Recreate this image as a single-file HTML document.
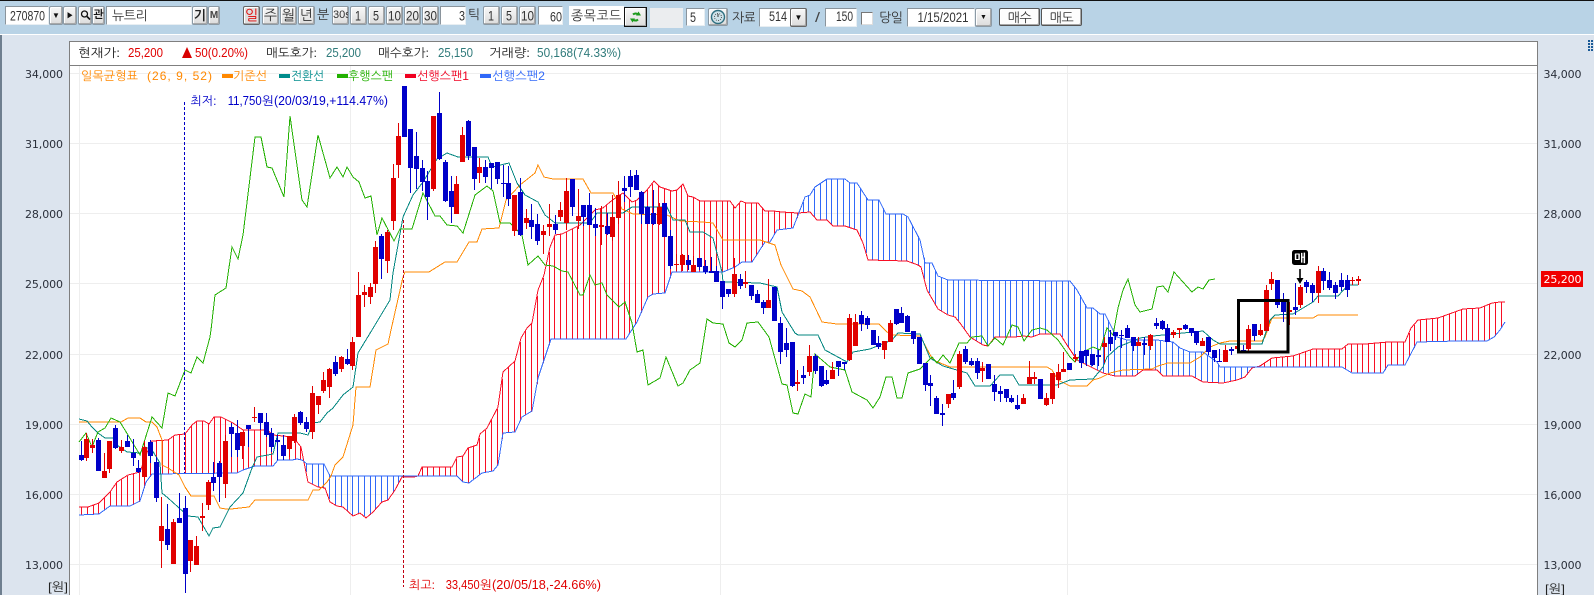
<!DOCTYPE html>
<html lang="ko"><head><meta charset="utf-8"><title>뉴트리</title>
<style>
html,body{margin:0;padding:0;background:#dce4ee}
#p{position:relative;width:1594px;height:595px;overflow:hidden;font-family:"Liberation Sans","NanumGothic","Noto Sans CJK KR",sans-serif;background:#dce4ee}
#t{position:absolute;left:0;top:0;width:1594px;height:34px;background:#b9d3e6;border-top:1px solid #111;box-sizing:border-box}
#w{position:absolute;left:0;top:34px;width:1594px;height:1px;background:#fff}
#e{position:absolute;left:0;top:35px;width:2px;height:560px;background:#6f7f8f}
.b,.i,.l{position:absolute;box-sizing:border-box;top:6px;height:19px;line-height:17px;text-align:center;font-size:13px;color:#333;white-space:nowrap;overflow:hidden}
.b{border:1px solid #8c9aa5;border-radius:2px;background:linear-gradient(#f8f8f8,#dcdcdc);box-shadow:inset -1px -1px 0 #a8a8a8,inset 1px 1px 0 #fff}
.i{background:#fff;border:1px solid;border-color:#8a949c #e8eef2 #e8eef2 #8a949c;text-align:right;padding-right:2px}
.l{background:none;border:0}
.s{top:8px}
svg{position:absolute;left:0;top:0}
.k{font-family:"Liberation Sans","NanumGothic","Noto Sans CJK KR",sans-serif;font-size:12px}
.m{font-family:"Liberation Sans",sans-serif;font-size:13px}
.t{font-family:"Liberation Sans",sans-serif;font-size:14px}
.a{font-family:"DejaVu Sans",sans-serif;font-size:11px;fill:#2a2f3a}
.n{fill:none;stroke-width:1;shape-rendering:crispEdges}
</style></head><body><div id="p">
<div id="t"></div><div id="w"></div><div id="e"></div>

<div class="i" style="left:5px;width:44px"></div>
<div class="b" style="left:49px;width:14px;font-size:8px;color:#111">▼</div>
<div class="b" style="left:63px;width:14px;font-size:8px;color:#111">▶</div>
<div class="b" style="left:78px;width:14px"><svg width="12" height="17"><circle cx="5.5" cy="7" r="3" fill="none" stroke="#111" stroke-width="1.3"/><path d="M8 9.5L11 12.5" stroke="#111" stroke-width="1.6"/></svg></div>
<div class="b" style="left:92px;width:13px;font-weight:bold;color:#111;font-size:11px">관</div>
<div class="i" style="left:106px;width:86px;text-align:left;padding-left:5px;letter-spacing:-.5px">뉴트리</div>
<div class="b" style="left:192px;width:16px;font-weight:bold;color:#222">기</div>
<div class="b" style="left:208px;width:12px;font-weight:bold;font-size:10px;color:#444">M</div>
<div class="b" style="left:243px;width:17px;color:#e00000;background:#dedede;border-color:#666;font-size:14px">일</div>
<div class="b" style="left:262px;width:17px;font-size:14px">주</div>
<div class="b" style="left:280px;width:17px;font-size:14px">월</div>
<div class="b" style="left:298px;width:17px;font-size:14px">년</div>
<div class="l" style="left:317px;width:12px">분</div>
<div class="b" style="left:332px;width:17px;font-size:11px">30s</div>
<div class="b" style="left:350px;width:17px"></div>
<div class="b" style="left:368px;width:17px"></div>
<div class="b" style="left:386px;width:17px"></div>
<div class="b" style="left:404px;width:17px"></div>
<div class="b" style="left:422px;width:17px"></div>
<div class="i" style="left:440px;width:26px"></div>
<div class="l" style="left:467px;width:14px">틱</div>
<div class="b" style="left:483px;width:17px"></div>
<div class="b" style="left:501px;width:17px"></div>
<div class="b" style="left:519px;width:17px"></div>
<div class="i" style="left:538px;width:25px"></div>
<div class="i" style="left:569px;width:55px;text-align:left;padding-left:1px;border-color:#fff;letter-spacing:.5px">종목코드입</div>
<div class="b" style="left:624px;width:23px;top:7px;height:20px;border-color:#111;border-radius:0"><svg width="21" height="18"><path d="M13.5 7A3.6 3.6 0 0 0 8 6.5" fill="none" stroke="#1c9a1c" stroke-width="2"/><path d="M11 7.5L16 7.5L13.5 3.5Z" fill="#1c9a1c"/><path d="M7.5 11A3.6 3.6 0 0 0 13 11.5" fill="none" stroke="#1c9a1c" stroke-width="2"/><path d="M5 10.5L10 10.5L7.5 14.5Z" fill="#1c9a1c"/></svg></div>
<div class="l s" style="left:650px;width:33px;height:20px;background:#ebedef"></div>
<div class="i s" style="left:686px;width:19px;height:18px"></div>
<div class="b s" style="left:708px;width:20px;height:18px"><svg width="18" height="16"><circle cx="9" cy="8" r="6.5" fill="#cfe3ea" stroke="#2f6f80" stroke-width="1.4"/><circle cx="9" cy="8" r="3.5" fill="none" stroke="#555" stroke-width="1" stroke-dasharray="1 1.2"/><path d="M9 5V8" stroke="#333"/></svg></div>
<div class="l s" style="left:732px;width:23px;top:9px;height:18px;line-height:18px;letter-spacing:-.5px">자료</div>
<div class="i s" style="left:759px;width:32px;height:19px"></div>
<div class="b s" style="left:790px;width:17px;height:19px;font-size:8px;color:#111;border-color:#666">▼</div>
<div class="i s" style="left:825px;width:32px;height:19px"></div>
<div class="l s" style="left:861px;width:12px;height:13px;top:12px;background:#fff;border:1px solid;border-color:#777 #ddd #ddd #777"></div>
<div class="l s" style="left:879px;width:23px;top:9px;height:18px;line-height:18px;letter-spacing:-.5px">당일</div>
<div class="i s" style="left:907px;width:68px;height:19px"></div>
<div class="b s" style="left:975px;width:17px;height:19px;font-size:7px;color:#111">▼</div>
<div class="b s" style="left:999px;width:41px;height:18px;border-color:#555;background:#fdfdfd;letter-spacing:-.5px">매수</div>
<div class="b s" style="left:1041px;width:41px;height:18px;border-color:#555;background:#fdfdfd;letter-spacing:-.5px">매도</div>

<svg width="1594" height="595" viewBox="0 0 1594 595" xmlns="http://www.w3.org/2000/svg" id="c">
<g class="t" fill="#333">
<text x="10" y="20.5" textLength="35" lengthAdjust="spacingAndGlyphs">270870</text>
<text x="355" y="20.5" textLength="6" lengthAdjust="spacingAndGlyphs">1</text>
<text x="373" y="20.5" textLength="6" lengthAdjust="spacingAndGlyphs">5</text>
<text x="388" y="20.5" textLength="13" lengthAdjust="spacingAndGlyphs">10</text>
<text x="406" y="20.5" textLength="13" lengthAdjust="spacingAndGlyphs">20</text>
<text x="424" y="20.5" textLength="13" lengthAdjust="spacingAndGlyphs">30</text>
<text x="459" y="20.5" textLength="6" lengthAdjust="spacingAndGlyphs">3</text>
<text x="488" y="20.5" textLength="6" lengthAdjust="spacingAndGlyphs">1</text>
<text x="506" y="20.5" textLength="6" lengthAdjust="spacingAndGlyphs">5</text>
<text x="521" y="20.5" textLength="13" lengthAdjust="spacingAndGlyphs">10</text>
<text x="550" y="21.5" textLength="12" lengthAdjust="spacingAndGlyphs">60</text>
<text x="690" y="22" textLength="6" lengthAdjust="spacingAndGlyphs">5</text>
<text x="769" y="21" textLength="18" lengthAdjust="spacingAndGlyphs">514</text>
<text x="815" y="22" textLength="5" lengthAdjust="spacingAndGlyphs" font-weight="normal" fill="#444">/</text>
<text x="836" y="21" textLength="17" lengthAdjust="spacingAndGlyphs">150</text>
<text x="917.5" y="22" textLength="51" lengthAdjust="spacingAndGlyphs">1/15/2021</text>
</g>
<rect x="69.5" y="41.5" width="1468" height="560" fill="#fff" stroke="#7f7f7f"/>
<path d="M69 65.5H1537" stroke="#7f7f7f" class="n"/>
<path class="n" stroke="#eeeeee" d="M70 73.5H1537M70 143.5H1537M70 213.5H1537M70 283.5H1537M70 354.5H1537M70 424.5H1537M70 494.5H1537M70 564.5H1537M79.5 66V595M350.5 66V595M720.5 66V595M1067.5 66V595"/>

<g id="hatch"></g>

<polyline id="lr" class="n" stroke="#f80e24" points="79,507 88,507 99,503 110,492 117,482 128,475 140,472 146,455 152,441 168,440 175,435 185,434 192,425 197,421 204,421 209,424 214,417 221,417 227,420 233,423 243,430 267,430 273,435 293,437 301,447 303,457 308,482 318,487 325,488 330,502 337,506 343,507 353,516 360,513 366,518 373,512 382,502 388,500 395,490 402,477 414,477 418,476 422,467 452,467 457,457 463,456 468,448 477,445 480,434 487,428 498,407 503,372 515,361 521,338 527,328 532,323 538,290 544,275 550,247 555,235 562,234 580,225 595,210 603,208 610,202 618,196 623,193 632,202 637,200 647,190 654,181 660,187 672,191 677,190 683,184 688,196 693,197 700,201 730,201 735,208 741,201 746,203 758,203 765,211 773,211 782,212 798,213 810,212 817,220 827,220 833,226 845,226 857,230 863,243 868,260 907,261 918,265 921,267 927,290 938,309 948,315 955,317 960,323 970,337 983,345 988,346 995,337 1015,337 1023,336 1032,337 1040,334 1060,334 1067,345 1077,360 1087,365 1103,373 1115,376 1135,376 1143,370 1157,370 1163,376 1192,376 1203,382 1223,383 1237,380 1245,377 1252,368 1260,366 1272,358 1293,356 1313,349 1342,349 1348,344 1365,344 1388,342 1405,342 1411,328 1418,320 1438,318 1463,309 1480,308 1492,303 1500,302 1505,302"/>
<polyline id="lb" class="n" stroke="#3068f8" points="79,515 99,514 110,506 130,506 140,501 146,482 152,474 237,473 243,470 255,466 273,466 278,460 292,460 297,459 302,460 307,464 324,464 330,476 457,476 463,482 469,483 482,473 493,471 498,465 503,433 515,432 522,417 532,411 538,378 545,357 551,339 626,339 633,328 637,322 648,297 653,294 665,293 672,272 723,272 735,267 742,262 752,262 765,242 770,242 777,230 793,228 805,197 810,195 815,187 827,179 845,179 850,183 857,183 868,200 879,200 886,214 903,214 908,217 920,240 925,263 932,263 938,276 948,280 1070,281 1077,290 1087,308 1093,308 1100,314 1105,314 1113,330 1117,337 1127,340 1157,340 1173,342 1180,348 1190,352 1203,352 1210,357 1217,362 1220,367 1342,367 1352,373 1383,373 1388,365 1405,365 1417,342 1458,341 1487,341 1494,337 1500,330 1505,322"/>
<polyline class="n" stroke="#ff8800" points="79,422 121,422 128,418 140,418 146,422 152,422 157,427 162,440 162,465 168,468 179,475 185,487 191,496 214,496 220,508 226,509 231,509 249,507 255,500 308,500 313,490 319,490 327,482 331,476 335,465 343,457 353,425 356,387 370,387 376,350 388,344 391,330 403,277 405,272 429,272 445,262 457,262 469,242 477,242 482,229 499,228 506,200 520,185 535,173 538,165 544,177 553,179 583,179 591,193 613,193 622,209 633,214 667,215 680,221 703,222 713,223 723,240 760,240 775,245 781,265 793,289 802,291 810,297 822,322 837,324 879,324 887,332 893,335 920,336 933,360 950,367 1047,367 1052,370 1058,380 1070,386 1087,386 1093,380 1100,378 1110,373 1123,370 1152,369 1158,366 1168,363 1190,363 1200,357 1210,347 1220,343 1230,341 1262,341 1265,337 1272,318 1313,318 1318,315 1358,315"/>
<polyline class="n" stroke="#00857f" points="79,419 87,421 92,427 98,433 105,438 113,438 117,445 127,452 140,453 145,447 152,450 160,463 162,493 168,498 178,507 188,516 198,517 209,536 213,528 220,527 230,507 243,493 252,468 257,457 273,454 278,433 300,433 308,435 313,423 320,422 327,413 333,408 343,395 353,387 358,353 372,330 390,300 393,273 403,217 413,195 423,182 437,159 447,153 458,157 488,157 492,167 509,163 517,183 525,195 538,202 545,215 555,223 590,223 597,213 623,213 632,207 667,207 673,220 685,220 690,232 703,232 713,238 722,272 723,282 760,283 777,287 782,312 795,333 798,335 818,335 825,350 847,362 853,352 870,349 892,340 898,333 920,334 930,358 943,366 967,373 975,386 990,386 1000,375 1013,375 1019,385 1057,385 1070,380 1093,379 1103,367 1107,357 1118,347 1140,338 1153,336 1203,331 1213,340 1220,344 1262,344 1270,320 1275,315 1293,314 1313,302 1318,296 1338,296 1348,285 1358,285"/>
<polyline class="n" stroke="#22b000" points="79,442 86,433 92,447 98,432 105,428 111,418 120,422 128,435 140,455 152,417 162,428 168,393 175,396 185,370 191,373 197,357 203,363 210,337 211,330 215,295 226,288 232,247 238,259 243,235 255,137 261,137 267,167 272,168 284,197 290,116 302,200 307,207 318,135 330,178 337,167 343,177 347,167 353,177 359,182 365,198 371,196 377,235 382,218 394,241 400,229 412,229 423,193 435,216 440,216 447,225 457,226 463,233 475,195 487,186 493,191 500,223 510,223 522,235 528,265 538,256 545,265 553,266 562,271 568,272 580,295 583,295 590,275 595,285 602,283 607,295 619,307 625,302 632,323 637,352 643,350 648,385 660,378 666,357 678,386 683,383 690,370 700,363 707,319 713,323 723,324 729,343 735,347 742,340 747,323 758,322 769,337 782,384 787,385 793,413 798,414 805,394 811,397 815,354 830,367 845,370 852,392 867,400 873,408 880,397 886,377 892,377 897,398 902,398 908,373 920,369 932,357 937,363 943,355 950,363 959,343 967,343 972,337 982,336 988,346 995,338 1003,345 1012,325 1018,327 1024,341 1032,330 1040,328 1047,330 1058,340 1070,357 1075,362 1083,352 1093,347 1100,350 1107,328 1113,335 1118,308 1123,290 1128,279 1135,305 1140,312 1152,309 1157,287 1163,286 1168,292 1174,272 1192,292 1198,287 1203,289 1209,280 1215,279"/>

<path d="M184.5 102V473" stroke="#0000c8" stroke-dasharray="3 2" class="n"/>
<path d="M403.5 220V587" stroke="#c00010" stroke-dasharray="3 2" class="n"/>

<g id="cand" shape-rendering="crispEdges"></g>

<rect x="1238.5" y="300.5" width="49.5" height="51.5" fill="none" stroke="#000" stroke-width="3" shape-rendering="crispEdges"/>
<rect x="1292" y="250" width="16" height="15" rx="2.5" fill="#000"/>
<text x="1294" y="262" class="k" fill="#fff" textLength="12" lengthAdjust="spacingAndGlyphs" style="font-size:11px;font-weight:bold">매</text>
<path d="M1300 269V279" stroke="#000" stroke-width="1.6"/><path d="M1296.5 278H1303.5L1300 284Z" fill="#000"/>

<g class="k">
<text x="78" y="57" fill="#222" textLength="42" lengthAdjust="spacingAndGlyphs">현재가:</text>
<polygon points="182,58 192,58 187,47" fill="#d80000"/>
<text x="266" y="57" fill="#222" textLength="51" lengthAdjust="spacingAndGlyphs">매도호가:</text>
<text x="378" y="57" fill="#222" textLength="51" lengthAdjust="spacingAndGlyphs">매수호가:</text>
<text x="489" y="57" fill="#222" textLength="41" lengthAdjust="spacingAndGlyphs">거래량:</text>

<text x="81" y="80" fill="#ff8800" textLength="57" lengthAdjust="spacingAndGlyphs">일목균형표</text>
<text x="147" y="80" fill="#ff8800" textLength="65" lengthAdjust="spacing">(26, 9, 52)</text>
<rect x="222" y="74" width="11" height="4" fill="#ff8800"/><text x="233" y="80" fill="#ff8800" textLength="34" lengthAdjust="spacingAndGlyphs">기준선</text>
<rect x="279" y="74" width="11" height="4" fill="#008c8c"/><text x="291" y="80" fill="#008c8c" textLength="33" lengthAdjust="spacingAndGlyphs">전환선</text>
<rect x="337" y="74" width="11" height="4" fill="#22b000"/><text x="348" y="80" fill="#22b000" textLength="45" lengthAdjust="spacingAndGlyphs">후행스팬</text>
<rect x="405" y="74" width="11" height="4" fill="#f00020"/><text x="417" y="80" fill="#f00020" textLength="52" lengthAdjust="spacingAndGlyphs">선행스팬1</text>
<rect x="480" y="74" width="11" height="4" fill="#3068f8"/><text x="492" y="80" fill="#3068f8" textLength="53" lengthAdjust="spacingAndGlyphs">선행스팬2</text>

<text x="190.5" y="105" fill="#0000c8" textLength="26" lengthAdjust="spacingAndGlyphs">최저:</text>
<text x="262" y="105" fill="#0000c8" textLength="12" lengthAdjust="spacingAndGlyphs">원</text>
<text x="409" y="589" fill="#e00000" textLength="26" lengthAdjust="spacingAndGlyphs">최고:</text>
<text x="480" y="589" fill="#e00000" textLength="12" lengthAdjust="spacingAndGlyphs">원</text>
<text x="48" y="591" fill="#222" textLength="20" lengthAdjust="spacingAndGlyphs">[원]</text>
<text x="1545" y="593" fill="#222" textLength="20" lengthAdjust="spacingAndGlyphs">[원]</text>
</g>
<g class="m">
<text x="128" y="57" fill="#e00000" textLength="35" lengthAdjust="spacingAndGlyphs">25,200</text>
<text x="195" y="57" fill="#e00000" textLength="53" lengthAdjust="spacingAndGlyphs">50(0.20%)</text>
<text x="326" y="57" fill="#2f7a7a" textLength="35" lengthAdjust="spacingAndGlyphs">25,200</text>
<text x="438" y="57" fill="#2f7a7a" textLength="35" lengthAdjust="spacingAndGlyphs">25,150</text>
<text x="537" y="57" fill="#2f7a7a" textLength="84" lengthAdjust="spacingAndGlyphs">50,168(74.33%)</text>
<text x="227.7" y="105" fill="#0000c8" textLength="34" lengthAdjust="spacingAndGlyphs">11,750</text>
<text x="274" y="105" fill="#0000c8" textLength="114" lengthAdjust="spacingAndGlyphs">(20/03/19,+114.47%)</text>
<text x="445.7" y="589" fill="#e00000" textLength="34" lengthAdjust="spacingAndGlyphs">33,450</text>
<text x="492" y="589" fill="#e00000" textLength="109" lengthAdjust="spacingAndGlyphs">(20/05/18,-24.66%)</text>
</g>
<g class="a">
<text x="25" y="78" textLength="38">34,000</text><text x="25" y="148" textLength="38">31,000</text><text x="25" y="218" textLength="38">28,000</text><text x="25" y="288" textLength="38">25,000</text><text x="25" y="359" textLength="38">22,000</text><text x="25" y="429" textLength="38">19,000</text><text x="25" y="499" textLength="38">16,000</text><text x="25" y="569" textLength="38">13,000</text>
<text x="1543.5" y="78" textLength="38">34,000</text><text x="1543.5" y="148" textLength="38">31,000</text><text x="1543.5" y="218" textLength="38">28,000</text><text x="1543.5" y="359" textLength="38">22,000</text><text x="1543.5" y="429" textLength="38">19,000</text><text x="1543.5" y="499" textLength="38">16,000</text><text x="1543.5" y="569" textLength="38">13,000</text>
</g>
<rect x="1541" y="271" width="42" height="16" fill="#f00000"/>
<text x="1543.5" y="283" class="a" style="fill:#fff" textLength="38">25,200</text>
<path d="M1588 40h2v2h-2zM1591 40h2v2h-2zM1588 43h2v2h-2zM1591 43h2v2h-2zM1588 46h2v2h-2zM1591 46h2v2h-2zM1588 49h2v2h-2zM1591 49h2v2h-2z" fill="#1a5a96"/>
</svg>
</div>
<script>
(function(){
var G=[
[60,330,[[64,0,333,375,390,392],[79,1,310,327,383,392],[97,1,327,345,354,368],[115,0,325,330,423,423],[133,1,368,423,443,443],[148,1,333,333,417,428],[166,0,285,293,353,357],[184,1,330,351,362,368],[202,0,315,333,351,351],[220,0,327,369,384,408],[235,0,390,414,426,428],[253,1,333,351,441,450],[271,0,330,336,378,398],[289,0,380,396,503,515],[304,1,500,588,633,714],[322,0,522,597,644,660],[340,1,567,576,702,702],[358,0,490,564,578,578],[376,0,498,534,731,789],[391,1,630,630,693,725],[409,1,618,648,705,705],[427,1,519,558,563,603],[445,1,450,456,525,540],[460,0,396,441,459,482],[478,0,393,399,441,515],[496,1,315,333,462,504],[514,0,280,291,312,381],[532,0,270,309,360,380],[547,1,305,306,348,388],[565,0,285,285,297,351],[583,1,231,260,263,276],[601,0,249,249,279,300],[619,0,250,276,315,320],[634,0,295,309,351,365],[652,0,315,330,336,390],[670,0,315,345,378,390],[688,1,318,318,357,380],[703,1,252,261,333,340],[721,0,243,246,279,285],[739,0,262,276,297,305],[757,1,168,189,305,327],[775,1,198,198,225,252],[790,1,126,150,183,190],[808,1,114,117,171,204],[826,0,78,96,132,138],[844,1,78,81,117,125],[862,0,57,87,102,105],[877,1,22,36,108,120]]],
[60,60,[[895,1,636,705,831,831],[913,1,675,696,705,740],[931,1,670,681,711,732],[946,1,543,561,672,700],[964,0,522,528,597,657],[982,1,510,516,603,638],[1000,1,312,354,483,510],[1015,1,189,228,315,354],[1033,0,78,78,231,231],[1051,0,207,207,324,399],[1069,0,216,288,327,387],[1087,0,300,324,366,393],[1102,0,333,363,411,480],[1120,1,168,168,387,393],[1138,0,96,159,297,300],[1156,0,300,306,423,426],[1174,0,348,393,441,489],[1189,1,348,372,462,462],[1207,1,201,225,306,306],[1225,0,180,183,288,300],[1243,0,261,261,357,390],[1258,1,293,321,339,370],[1276,0,300,321,351,369],[1294,0,309,309,324,386],[1312,0,306,306,357,372]]],
[500,140,[[10,0,75,128,131,170],[25,0,78,129,177,198],[43,1,165,165,273,288],[61,0,114,156,285,288],[79,1,207,234,249,267],[94,0,192,240,261,297],[112,0,222,252,303,315],[130,1,255,273,285,342],[148,1,192,252,261,288],[166,0,225,252,270,282],[181,1,186,210,231,243],[199,1,114,153,249,270],[217,0,117,117,201,228],[235,1,147,228,243,267],[250,0,195,195,231,258],[268,0,160,195,255,255],[286,0,204,252,264,288],[304,1,198,255,261,315],[322,0,220,258,282,285],[337,1,165,231,291,303],[355,1,123,165,234,252],[373,0,108,144,153,186],[391,0,90,108,141,170],[409,0,90,105,150,150],[424,0,153,156,222,252],[442,0,198,201,252,252],[460,0,150,219,252,255],[478,1,190,201,252,255],[493,0,189,189,291,291],[511,0,270,288,378,387],[529,1,342,372,375,393],[547,1,342,345,375,393],[565,0,345,360,375,390],[580,1,348,375,396,396],[598,0,354,354,381,390],[616,0,360,378,396,402],[634,0,351,393,399,399],[649,0,378,393,426,426],[667,0,423,423,471,507],[685,0,447,447,462,471],[703,1,354,402,462,471],[721,0,402,417,438,447],[736,1,393,426,431,444],[754,0,435,435,468,480],[772,0,450,462,489,489],[790,0,480,486,504,522],[805,1,417,480,504,504],[823,0,441,441,543,543],[841,0,531,549,636,672],[859,0,564,609,630,651],[877,0,606,606,738,741],[892,1,690,726,732,753],[910,0,678,705,714,732],[928,1,615,648,696,708],[946,0,642,648,693,702],[964,0,678,678,738,741],[979,0,690,720,732,735],[997,1,666,690,717,717],[1015,0,663,663,681,708],[1033,0,666,666,672,690],[1048,1,522,534,660,663],[1066,1,522,546,618,618],[1084,0,513,525,552,573],[1102,0,528,534,555,567],[1120,0,570,570,615,615],[1135,0,588,609,621,627],[1153,1,603,603,630,657],[1171,1,540,549,606,606],[1189,0,507,507,552,555],[1204,0,501,519,549,549],[1222,0,525,528,576,576],[1240,0,573,573,597,612],[1258,0,591,591,672,672],[1276,0,669,669,735,753],[1291,0,705,729,738,798],[1309,0,768,774,822,822],[1327,0,792,819,825,858],[1345,1,762,762,792,804],[1360,0,720,759,774,780],[1378,1,633,642,741,747]]],
[960,240,[[16,0,318,327,366,372],[34,0,354,363,375,378],[52,0,354,363,399,417],[67,1,366,384,392,426],[85,0,372,372,417,417],[103,0,405,432,456,483],[121,0,438,453,461,486],[139,0,447,447,474,486],[154,0,465,474,486,489],[172,0,465,495,507,510],[190,1,462,474,492,492],[208,1,363,411,432,432],[223,1,396,411,417,432],[241,0,417,417,477,477],[259,1,459,474,495,498],[277,1,399,399,477,492],[295,1,372,396,420,444],[310,1,336,387,396,396],[328,0,369,369,390,390],[346,1,342,351,357,366],[364,0,333,333,369,384],[379,0,330,330,348,378],[397,0,342,342,375,378],[415,0,330,345,351,378],[433,1,291,309,321,369],[451,0,270,291,312,333],[466,0,276,276,288,300],[484,0,270,285,288,324],[502,0,255,264,294,294],[520,0,291,291,318,333],[535,1,291,306,318,318],[553,0,291,309,315,345],[571,1,282,285,318,330],[589,0,234,249,258,267],[607,0,240,243,267,270],[622,0,252,264,306,306],[640,1,270,276,285,294],[658,1,264,264,270,294],[676,0,252,255,267,270],[694,0,264,264,279,288],[709,0,273,273,309,315],[727,1,294,303,318,318],[745,0,291,291,336,345],[763,0,330,330,354,366],[778,0,327,363,366,366],[796,1,315,330,366,366],[814,0,321,327,333,345],[832,1,312,318,327,327],[850,0,315,330,333,336],[865,1,255,267,327,333],[883,0,252,252,288,303],[901,1,252,270,285,288],[919,1,135,150,273,273],[934,1,96,117,132,150],[952,0,120,120,195,204],[970,0,159,186,216,246],[988,1,186,210,216,255],[1006,0,129,201,210,225],[1021,1,135,141,195,204],[1039,0,120,126,141,159],[1057,0,129,135,159,186],[1075,1,78,93,159,189],[1090,0,84,93,123,150],[1108,0,96,120,144,150],[1126,0,126,135,159,177],[1144,0,99,120,141,153],[1162,0,105,120,150,171],[1177,1,112,120,124,136],[1195,1,108,118,122,135]]]
];
var s='';
G.forEach(function(g){g[2].forEach(function(c){
 var x=Math.round(g[0]+c[0]/3-.5),f=c[1]?'#e00000':'#0000c8';
 var y=function(v){return Math.round(g[1]+v/3)};
 s+='<rect x="'+x+'" y="'+y(c[2])+'" width="1" height="'+Math.max(1,y(c[5])-y(c[2]))+'" fill="'+f+'"/>';
 s+='<rect x="'+(x-2)+'" y="'+y(c[3])+'" width="5" height="'+Math.max(1,y(c[4])-y(c[3]))+'" fill="'+f+'"/>';
});});
document.getElementById('cand').innerHTML=s;
function pts(id){return document.getElementById(id).getAttribute('points').trim().split(/\s+/).map(function(p){return p.split(',').map(Number)})}
function at(P,x){for(var i=1;i<P.length;i++){if(x<=P[i][0]){var a=P[i-1],b=P[i];return a[1]+(b[1]-a[1])*(x-a[0])/(b[0]-a[0]||1)}}return P[P.length-1][1]}
var R=pts('lr'),B=pts('lb'),h='';
for(var i=0;i<248;i++){var x=Math.round(81+5.772*i);if(x>1504)break;var r=Math.round(at(R,x)),b=Math.round(at(B,x));if(r==b)continue;
 h+='<rect x="'+x+'" y="'+Math.min(r,b)+'" width="1" height="'+Math.abs(r-b)+'" fill="'+(r<b?'#f80e24':'#3068f8')+'"/>';}
var H=document.getElementById('hatch');H.setAttribute('shape-rendering','crispEdges');H.innerHTML=h;
})();
</script>
</body></html>
